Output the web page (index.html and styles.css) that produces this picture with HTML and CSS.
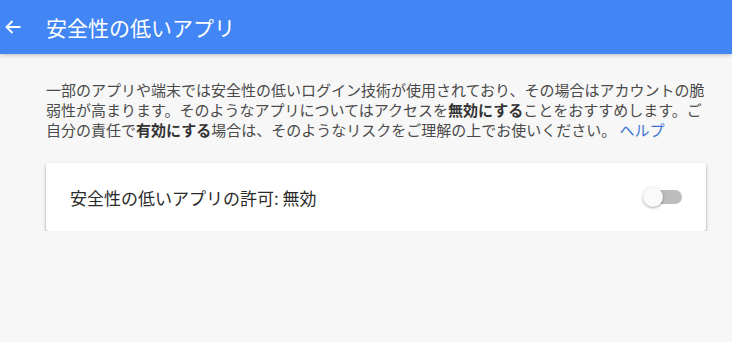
FILE: index.html
```html
<!DOCTYPE html>
<html lang="ja">
<head>
<meta charset="utf-8">
<link rel="stylesheet" href="styles.css">
</head>
<body>
<header class="appbar">
  <svg class="back" width="16" height="14" viewBox="0 0 16 14"><path d="M15.5 7H1.5M7.5 1L1.5 7L7.5 13" fill="none" stroke="#fff" stroke-width="1.8"/></svg>
  <h1 class="title">安全性の低いアプリ</h1>
</header>
<main class="content">
  <p class="desc">一部のアプリや端末では安全性の低いログイン技術が使用されており、その場合はアカウントの脆弱性が高まります。そのようなアプリについてはアクセスを<b>無効にする</b>ことをおすすめします。ご自分の責任で<b>有効にする</b>場合は、そのようなリスクをご理解の上でお使いください。 <a class="link" href="#">ヘルプ</a></p>
  <div class="card">
    <span class="card-label">安全性の低いアプリの許可: 無効</span>
    <span class="toggle"><span class="track"></span><span class="thumb"></span></span>
  </div>
</main>
</body>
</html>
```
FILE: styles.css
```css
html, body {
  margin: 0;
  padding: 0;
  background: #f7f7f7;
  font-family: "Noto Sans CJK JP", "Noto Sans", sans-serif;
}
.appbar {
  height: 54px;
  background: #4285f4;
  display: flex;
  align-items: center;
  box-shadow: 0 1px 4px rgba(0,0,0,0.25);
  position: relative;
}
.back {
  margin-left: 5px;
}
.title {
  margin: 0 0 0 25px;
  font-size: 21px;
  font-weight: 400;
  color: #fff;
  line-height: 1;
}
.content {
  width: 660px;
  padding: 26px 0 0 46px;
}
.desc {
  margin: 0;
  font-size: 15px;
  line-height: 20px;
  color: #4a4a4a;
}
.desc b {
  font-weight: 700;
  color: #333;
}
.link {
  color: #3f74d6;
  text-decoration: none;
}
.card {
  margin-top: 23px;
  height: 68px;
  background: #fff;
  border-radius: 2px;
  box-shadow: 0 1px 2px rgba(0,0,0,0.3), 0 2px 4px rgba(0,0,0,0.15);
  display: flex;
  align-items: center;
  justify-content: space-between;
  padding: 0 24px;
}
.card-label {
  font-size: 17px;
  color: #2a2a2a;
}
.toggle {
  position: relative;
  width: 39px;
  height: 20px;
  display: flex;
  align-items: center;
}
.track {
  margin-left: 3px;
  width: 36px;
  height: 14px;
  border-radius: 7px;
  background: #bdbdbd;
}
.thumb {
  position: absolute;
  left: 0;
  top: 0;
  width: 20px;
  height: 20px;
  border-radius: 50%;
  background: #fafafa;
  box-shadow: 0 1px 3px rgba(0,0,0,0.35);
}
```
